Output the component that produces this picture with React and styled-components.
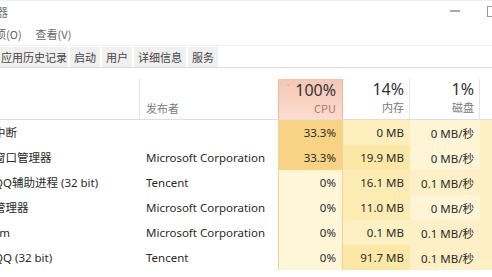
import React from "react";
import styled, { createGlobalStyle } from "styled-components";

const GlobalStyle = createGlobalStyle`
  html, body {
    margin: 0;
    padding: 0;
    background: #ffffff;
    overflow: hidden;
  }
  body {
    font-family: "Noto Sans", "Noto Sans CJK SC", sans-serif;
    color: #222;
  }
`;

const Window = styled.div`
  width: 492px;
  height: 277px;
  overflow: hidden;
  display: flex;
  flex-direction: column;
  background: #fff;
`;

const TitleBar = styled.div`
  height: 20px;
  display: flex;
  align-items: center;
  justify-content: space-between;
  border-top: 1px solid #eeeeee;
`;

const Title = styled.span`
  font-family: "Noto Sans CJK SC", sans-serif;
  font-size: 12px;
  color: #777;
  text-indent: -52px;
  white-space: nowrap;
`;

const WinButtons = styled.div`
  flex-shrink: 0;
  display: flex;
  align-items: center;
  gap: 27px;
  padding-right: 0;
`;

const MinBtn = styled.div`
  flex-shrink: 0;
  width: 10px;
  height: 2px;
  background: #a8a8a8;
`;

const MaxBtn = styled.div`
  flex-shrink: 0;
  width: 4px;
  height: 9px;
  border: 1px solid #999;
  border-right: none;
`;

const MenuBar = styled.div`
  height: 22px;
  display: flex;
  align-items: center;
  gap: 14px;
  border-bottom: 1px solid #f0f0f0;
  font-family: "Noto Sans CJK SC", sans-serif;
  font-size: 11px;
  color: #666;
  padding-top: 2px;
`;

const MenuItem = styled.span`
  white-space: nowrap;
  margin-left: ${(p) => p.$shift || 0}px;
`;

const TabBar = styled.div`
  height: 20px;
  margin-top: 1px;
  display: flex;
  align-items: stretch;
  gap: 2px;
  border-bottom: 1px solid #dcdcdc;
`;

const Tab = styled.span`
  display: flex;
  align-items: center;
  padding: 0 ${(p) => p.$pad || 4}px;
  background: #f0f0f0;
  font-family: "Noto Sans CJK SC", sans-serif;
  font-size: 11px;
  color: #444;
  white-space: nowrap;
`;

const Table = styled.div`
  display: grid;
  grid-template-columns: 140px 138px 65px 67px 70px 1fr;
  grid-template-rows: 52px;
  grid-auto-rows: 25px;
`;

const HeadCell = styled.div`
  box-sizing: border-box;
  padding: 11px 6px 0 6px;
  display: flex;
  flex-direction: column;
  align-items: ${(p) => (p.$left ? "flex-start" : "flex-end")};
  justify-content: ${(p) => (p.$left ? "flex-end" : "flex-start")};
  border-bottom: 1px solid #dedede;
  position: relative;
`;

const SepLine = styled.span`
  position: absolute;
  right: 0;
  top: 11px;
  bottom: 0;
  width: 1px;
  background: #e4e4e4;
`;

const SortedHead = styled(HeadCell)`
  padding-top: 0;
  margin-top: 11px;
  background: linear-gradient(#f6c8b6, #fbdccf);
  border-left: 1px solid #e8b8a2;
  border-right: 1px solid #e8b8a2;
  border-top: 1px solid #f0c6b4;
`;

const Chevron = styled.span`
  position: absolute;
  left: 8px;
  top: 1px;
  font-size: 9px;
  color: #999;
`;

const Percent = styled.span`
  font-family: "Noto Sans", sans-serif;
  font-size: 16px;
  line-height: 20px;
  color: #333;
`;

const HeadLabel = styled.span`
  font-family: "Noto Sans CJK SC", sans-serif;
  font-size: 11px;
  line-height: 16px;
  color: ${(p) => p.$color || "#7a7a7a"};
  padding-bottom: ${(p) => (p.$left ? "3px" : "0")};
`;

const Cell = styled.div`
  display: flex;
  align-items: center;
  justify-content: ${(p) => (p.$right ? "flex-end" : "flex-start")};
  padding: 0 6px;
  font-size: 11.5px;
  white-space: nowrap;
  overflow: hidden;
  color: #2a2a2a;
  background: ${(p) => p.$bg || "transparent"};
  border-left: ${(p) => (p.$edge ? "1px solid #ecd3a0" : "none")};
  border-right: ${(p) => (p.$edge ? "1px solid #ecd3a0" : "none")};
  font-family: "Noto Sans", "Noto Sans CJK SC", sans-serif;
`;

const NameCell = styled(Cell)`
  padding: 0;
  text-indent: -29px;
  display: block;
  line-height: 25px;
`;

const heat = {
  high: "#f8d383",
  cpuLow: "#fff6d8",
  m1: "#fdefbd",
  m2: "#fbe7a6",
  m3: "#fcebb2",
  m4: "#fdf0c2",
  d0: "#fef5d6",
  d1: "#fdf0c6",
};

const rows = [
  { name: "系统中断", pub: "", cpu: "33.3%", cpuBg: heat.high, mem: "0 MB", memBg: heat.m1, disk: "0 MB/秒", diskBg: heat.d0 },
  { name: "桌面窗口管理器", pub: "Microsoft Corporation", cpu: "33.3%", cpuBg: heat.high, mem: "19.9 MB", memBg: heat.m2, disk: "0 MB/秒", diskBg: heat.d0 },
  { name: "腾讯QQ辅助进程 (32 bit)", pub: "Tencent", cpu: "0%", cpuBg: heat.cpuLow, mem: "16.1 MB", memBg: heat.m3, disk: "0.1 MB/秒", diskBg: heat.d1 },
  { name: "任务管理器", pub: "Microsoft Corporation", cpu: "0%", cpuBg: heat.cpuLow, mem: "11.0 MB", memBg: heat.m3, disk: "0 MB/秒", diskBg: heat.d0 },
  { name: "System", pub: "Microsoft Corporation", cpu: "0%", cpuBg: heat.cpuLow, mem: "0.1 MB", memBg: heat.m4, disk: "0.1 MB/秒", diskBg: heat.d1 },
  { name: "腾讯QQ (32 bit)", pub: "Tencent", cpu: "0%", cpuBg: heat.cpuLow, mem: "91.7 MB", memBg: heat.m2, disk: "0.1 MB/秒", diskBg: heat.d1 },
];

export default function App() {
  return (
    <>
      <GlobalStyle />
      <Window>
        <TitleBar>
          <Title>任务管理器</Title>
          <WinButtons>
            <MinBtn />
            <MaxBtn />
          </WinButtons>
        </TitleBar>
        <MenuBar>
          <MenuItem $shift={-16}>选项(O)</MenuItem>
          <MenuItem>查看(V)</MenuItem>
        </MenuBar>
        <TabBar>
          <Tab $pad={1}>应用历史记录</Tab>
          <Tab>启动</Tab>
          <Tab>用户</Tab>
          <Tab>详细信息</Tab>
          <Tab>服务</Tab>
        </TabBar>
        <Table>
          <HeadCell>
            <SepLine />
          </HeadCell>
          <HeadCell $left>
            <HeadLabel $left>发布者</HeadLabel>
          </HeadCell>
          <SortedHead>
            <Chevron>˅</Chevron>
            <Percent>100%</Percent>
            <HeadLabel $color="#b07a6a">CPU</HeadLabel>
          </SortedHead>
          <HeadCell>
            <Percent>14%</Percent>
            <HeadLabel>内存</HeadLabel>
            <SepLine />
          </HeadCell>
          <HeadCell>
            <Percent>1%</Percent>
            <HeadLabel>磁盘</HeadLabel>
            <SepLine />
          </HeadCell>
          <HeadCell />
          {rows.map((r) => (
            <React.Fragment key={r.name}>
              <NameCell>{r.name}</NameCell>
              <Cell>{r.pub}</Cell>
              <Cell $right $edge $bg={r.cpuBg}>{r.cpu}</Cell>
              <Cell $right $bg={r.memBg}>{r.mem}</Cell>
              <Cell $right $bg={r.diskBg}>{r.disk}</Cell>
              <Cell $bg={heat.m4} />
            </React.Fragment>
          ))}
        </Table>
      </Window>
    </>
  );
}
